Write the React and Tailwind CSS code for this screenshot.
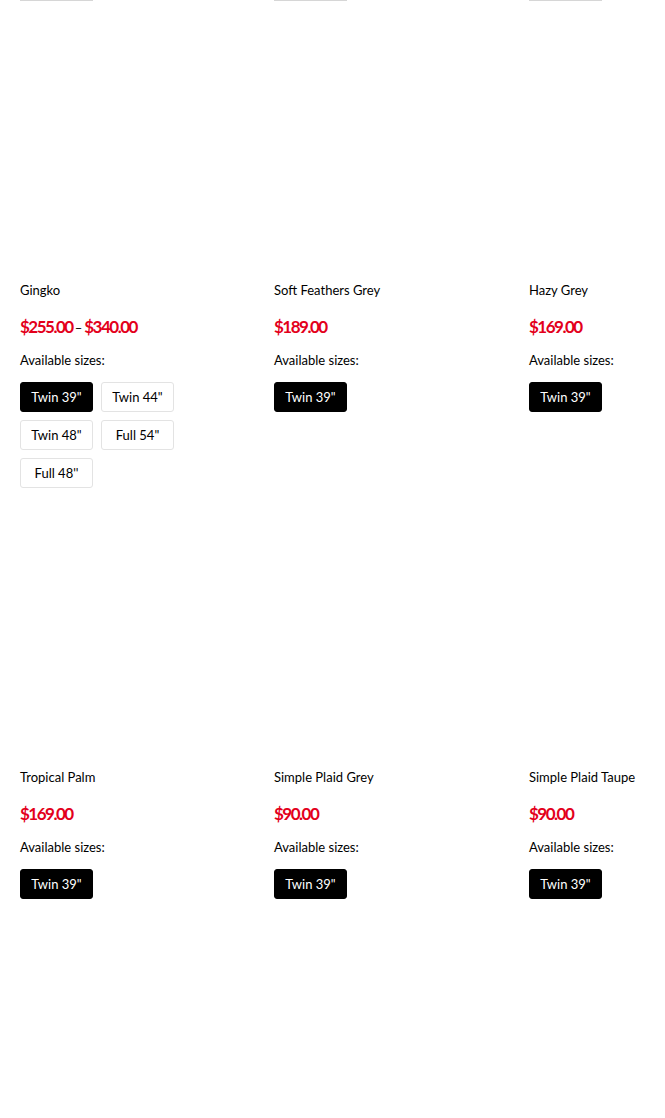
const products = [
  { name: "Gingko", price: ["$255.00", "$340.00"], sizes: ["Twin 39\"", "Twin 44\"", "Twin 48\"", "Full 54\"", "Full 48''"] },
  { name: "Soft Feathers Grey", price: ["$189.00"], sizes: ["Twin 39\""] },
  { name: "Hazy Grey", price: ["$169.00"], sizes: ["Twin 39\""] },
  { name: "Tropical Palm", price: ["$169.00"], sizes: ["Twin 39\""] },
  { name: "Simple Plaid Grey", price: ["$90.00"], sizes: ["Twin 39\""] },
  { name: "Simple Plaid Taupe", price: ["$90.00"], sizes: ["Twin 39\""] },
];

function SizeButton({ label, active }) {
  return (
    <button
      className={`w-[73px] h-[30px] rounded-[3px] border text-[13px] leading-none ${
        active ? "bg-black border-black text-white" : "bg-white border-[#e3e3e3] text-black"
      }`}
    >
      {label}
    </button>
  );
}

function ProductCard({ product }) {
  return (
    <div className="pt-[40px]">
      {/* image area (blank in the shot) */}
      <div className="h-[230px]" />
      <div className="mt-[10px] text-[13px] leading-[18px] text-black">{product.name}</div>
      <div className="mt-[17px] h-[22px] flex items-baseline text-[17px] leading-[22px] font-bold tracking-[-1.5px] text-[#e3001b]">
        <span>{product.price[0]}</span>
        {product.price[1] && (
          <>
            <span className="text-black text-[13px] font-normal mx-[2px] tracking-normal">–</span>
            <span>{product.price[1]}</span>
          </>
        )}
      </div>
      <div className="mt-[13px] text-[13px] leading-[18px] text-black">Available sizes:</div>
      <div className="mt-[13px] flex flex-wrap gap-x-[8px] gap-y-[8px] w-[160px]">
        {product.sizes.map((s, i) => (
          <SizeButton key={s} label={s} active={i === 0} />
        ))}
      </div>
    </div>
  );
}

export default function App() {
  return (
    <div
      className="w-[665px] h-[1118px] overflow-hidden bg-white"
      style={{ fontFamily: "Lato, 'Liberation Sans', sans-serif" }}
    >
      <div className="pl-[20px]">
        {/* bottom edges of the previous row's size buttons */}
        <div className="grid grid-cols-[234px_235px_234px] gap-x-[20px]">
          <div className="w-[73px] h-[1px] bg-[#d6d6d6]" />
          <div className="w-[73px] h-[1px] bg-[#d6d6d6]" />
          <div className="w-[73px] h-[1px] bg-[#d6d6d6]" />
        </div>
        <div className="grid grid-cols-[234px_235px_234px] gap-x-[20px]">
          {products.map((p) => (
            <ProductCard key={p.name} product={p} />
          ))}
        </div>
      </div>
    </div>
  );
}
